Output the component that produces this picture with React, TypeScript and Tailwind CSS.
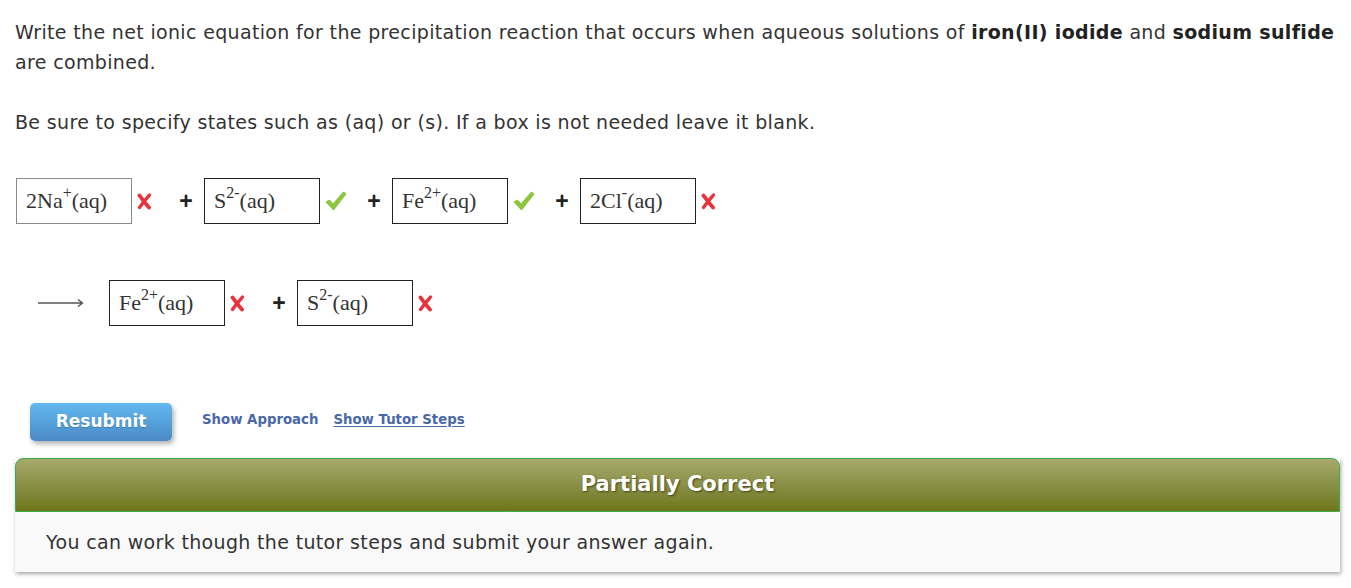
import React from "react";

const verdana = "font-['Verdana','DejaVu_Sans',sans-serif]";
const serif = "font-['Liberation_Serif','Times_New_Roman',serif]";

const Cross = () => (
  <svg width="15" height="17" viewBox="0 0 15 17" className="block">
    <path d="M2.5 2.5 C5 5.5 8 10 12 14.5" stroke="#e8323c" strokeWidth="3.8" strokeLinecap="round" fill="none" />
    <path d="M12.5 2 C9.5 5.5 6 9.5 2.5 14.5" stroke="#e8323c" strokeWidth="3.3" strokeLinecap="round" fill="none" />
  </svg>
);

const Check = () => (
  <svg width="22" height="21" viewBox="0 0 22 21" className="block">
    <path d="M1.5 11 L4.5 9.5 L8 13.5 L18.5 1.5 L20.5 3 L8.5 18.5 Z" fill="#8dc63f" stroke="#8dc63f" strokeWidth="1.6" strokeLinejoin="round" />
  </svg>
);

const Box = ({ base, sup, tail, gray }: { base: string; sup: string; tail: string; gray?: boolean }) => (
  <div
    className={`w-[116px] h-[46px] flex items-center pl-[9px] pb-[2px] ${serif} text-[22px] text-[#333] border ${gray ? "border-[#8a8a8a]" : "border-[#222]"}`}
  >
    <span>{base}</span>
    <span className="text-[16px] relative -top-[7px]">{sup}</span>
    <span>{tail}</span>
  </div>
);

const Plus = () => (
  <div className="w-[36px] flex justify-center text-[23px] font-bold text-[#222] font-['Liberation_Sans',Arial,sans-serif]">+</div>
);

const Term = ({ base, sup, tail, ok, gray, last }: { base: string; sup: string; tail: string; ok?: boolean; gray?: boolean; last?: boolean }) => (
  <div className="flex items-center">
    <Box base={base} sup={sup} tail={tail} gray={gray} />
    <div className="w-[36px] pl-[5px] flex items-center">{ok ? <Check /> : <Cross />}</div>
    {!last && <Plus />}
  </div>
);

export default function App() {
  return (
    <div className={`w-[1351px] h-[588px] bg-white overflow-hidden ${verdana} text-[#333]`}>
      <div className="pl-[15px] pr-[12px] pt-[17px] text-[19px] tracking-[0.34px] leading-[30px]">
        <p>
          Write the net ionic equation for the precipitation reaction that occurs when aqueous solutions of{" "}
          <b className="text-[#222]">iron(II) iodide</b> and <b className="text-[#222]">sodium sulfide</b> are combined.
        </p>
        <p className="mt-[30px]">Be sure to specify states such as (aq) or (s). If a box is not needed leave it blank.</p>
      </div>

      <div className="flex items-center pl-[16px] mt-[41px]">
        <Term base="2Na" sup="+" tail="(aq)" gray />
        <Term base="S" sup="2-" tail="(aq)" ok />
        <Term base="Fe" sup="2+" tail="(aq)" ok />
        <Term base="2Cl" sup="-" tail="(aq)" last />
      </div>

      <div className="flex items-center pl-[38px] mt-[56px]">
        <svg width="46" height="10" viewBox="0 0 46 10" className="block mr-[25px]">
          <path d="M0 5 H44 M40 1.5 L44.5 5 L40 8.5" stroke="#555" strokeWidth="1.4" fill="none" />
        </svg>
        <Term base="Fe" sup="2+" tail="(aq)" />
        <Term base="S" sup="2-" tail="(aq)" last />
      </div>

      <div className="flex items-center pl-[30px] mt-[77px]">
        <button className="w-[142px] h-[38px] rounded-[5px] bg-gradient-to-b from-[#62b8f0] to-[#4a8ac6] text-white font-bold text-[17px] shadow-[2px_3px_5px_rgba(0,0,0,0.3)] [text-shadow:0_1px_1px_rgba(0,0,0,0.2)]">
          Resubmit
        </button>
        <div className="ml-[30px] -mt-[4px] flex gap-[15px] text-[13.3px] font-bold text-[#4a68a8]">
          <span>Show Approach</span>
          <span className="underline underline-offset-2">Show Tutor Steps</span>
        </div>
      </div>

      <div className="mx-[15px] w-[1325px] mt-[17px] shadow-[1px_2px_4px_rgba(0,0,0,0.35)]">
        <div className="h-[54px] rounded-t-[8px] border border-[#3cae4c] bg-gradient-to-b from-[#a7a96c] to-[#6d7717] flex items-center justify-center">
          <span className="text-white font-bold text-[21px] [text-shadow:1px_1px_2px_rgba(40,40,0,0.7)]">Partially Correct</span>
        </div>
        <div className="h-[60px] bg-[#f9f9f9] flex items-center pl-[31px] text-[19px] tracking-[0.34px] text-[#333]">
          You can work though the tutor steps and submit your answer again.
        </div>
      </div>
    </div>
  );
}
